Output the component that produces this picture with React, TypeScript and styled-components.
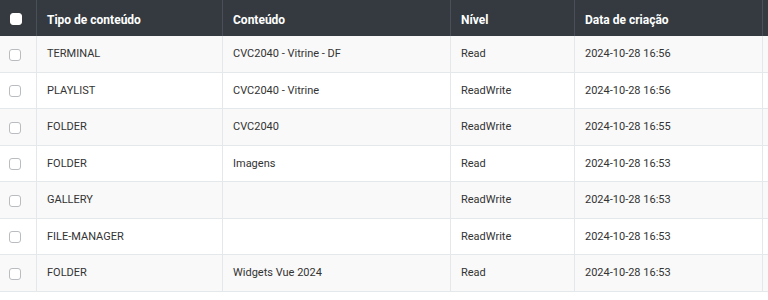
import styled, { createGlobalStyle } from "styled-components";

const GlobalStyle = createGlobalStyle`
	html, body {
		margin: 0;
		padding: 0;
		background: #fff;
		font-family: Roboto, "Noto Sans", Arial, sans-serif;
	}
`;

const COLUMNS = "37px 186px 228px 124px 188px 10px";

const Table = styled.div`
	width: 778px;
	display: flex;
	flex-direction: column;
`;

const HeaderRow = styled.div`
	display: grid;
	grid-template-columns: ${COLUMNS};
	height: 36px;
	background-color: #343a40;
`;

const HeaderCell = styled.div`
	display: flex;
	align-items: center;
	padding: 3px 0 0 10px;
	border-right: 1px solid #4a5057;
	color: #fff;
	font-size: 12px;
	font-weight: 700;
`;

const Row = styled.div<{ $striped: boolean }>`
	display: grid;
	grid-template-columns: ${COLUMNS};
	height: 36.5px;
	box-sizing: border-box;
	border-bottom: 1px solid #e5e8eb;
	background-color: ${(p) => (p.$striped ? "#f9f9f9" : "#fff")};
`;

const Cell = styled.div`
	display: flex;
	align-items: center;
	padding-left: 10px;
	border-right: 1px solid #e5e8eb;
	color: #333;
	font-size: 11px;
	white-space: nowrap;
`;

const CheckCell = styled(Cell)`
	padding-left: 9px;
`;

const HeaderCheckCell = styled(HeaderCell)`
	padding: 0 0 0 10px;
`;

const Checkbox = styled.span<{ $dark?: boolean }>`
	width: 12px;
	height: 12px;
	box-sizing: border-box;
	border-radius: 3px;
	border: 1px solid ${(p) => (p.$dark ? "#fff" : "#b9bdc1")};
	background-color: #fff;
	margin-top: ${(p) => (p.$dark ? "1px" : "2px")};
`;

const rows = [
	{ type: "TERMINAL", content: "CVC2040 - Vitrine - DF", level: "Read", date: "2024-10-28 16:56" },
	{ type: "PLAYLIST", content: "CVC2040 - Vitrine", level: "ReadWrite", date: "2024-10-28 16:56" },
	{ type: "FOLDER", content: "CVC2040", level: "ReadWrite", date: "2024-10-28 16:55" },
	{ type: "FOLDER", content: "Imagens", level: "Read", date: "2024-10-28 16:53" },
	{ type: "GALLERY", content: "", level: "ReadWrite", date: "2024-10-28 16:53" },
	{ type: "FILE-MANAGER", content: "", level: "ReadWrite", date: "2024-10-28 16:53" },
	{ type: "FOLDER", content: "Widgets Vue 2024", level: "Read", date: "2024-10-28 16:53" },
];

export default function App() {
	return (
		<>
			<GlobalStyle />
			<Table>
				<HeaderRow>
					<HeaderCheckCell>
						<Checkbox $dark />
					</HeaderCheckCell>
					<HeaderCell>Tipo de conteúdo</HeaderCell>
					<HeaderCell>Conteúdo</HeaderCell>
					<HeaderCell>Nível</HeaderCell>
					<HeaderCell>Data de criação</HeaderCell>
					<HeaderCell />
				</HeaderRow>
				{rows.map((row, i) => (
					<Row key={i} $striped={i % 2 === 0}>
						<CheckCell>
							<Checkbox />
						</CheckCell>
						<Cell>{row.type}</Cell>
						<Cell>{row.content}</Cell>
						<Cell>{row.level}</Cell>
						<Cell>{row.date}</Cell>
						<Cell />
					</Row>
				))}
			</Table>
		</>
	);
}
